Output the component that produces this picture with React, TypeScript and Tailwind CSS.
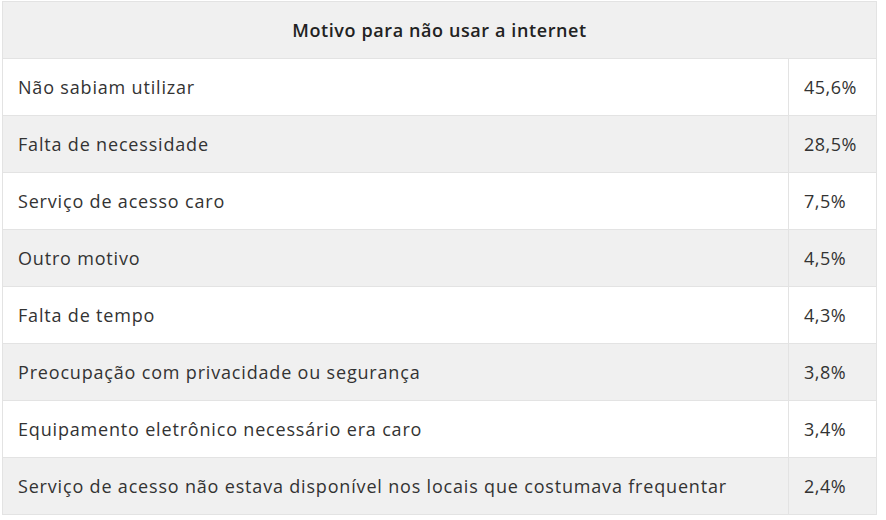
import React from "react";

const rows: [string, string][] = [
  ["Não sabiam utilizar", "45,6%"],
  ["Falta de necessidade", "28,5%"],
  ["Serviço de acesso caro", "7,5%"],
  ["Outro motivo", "4,5%"],
  ["Falta de tempo", "4,3%"],
  ["Preocupação com privacidade ou segurança", "3,8%"],
  ["Equipamento eletrônico necessário era caro", "3,4%"],
  ["Serviço de acesso não estava disponível nos locais que costumava frequentar", "2,4%"],
];

export default function App() {
  return (
    <div className="w-[886px] h-[520px] bg-white pt-px pl-[2px]" style={{ fontFamily: "'Open Sans', sans-serif" }}>
      <table className="w-[875px] border-collapse border border-[#e3e3e3] text-[#333]">
        <thead>
          <tr className="h-[57px] bg-[#f0f0f0]">
            <th colSpan={2} className="border border-[#e3e3e3] text-[18px] font-semibold tracking-[0.6px] text-[#222] text-center">
              Motivo para não usar a internet
            </th>
          </tr>
        </thead>
        <tbody>
          {rows.map(([a, b], i) => (
            <tr key={i} className={`h-[57px] ${i % 2 === 1 ? "bg-[#f0f0f0]" : "bg-white"}`}>
              <td className="border border-[#e3e3e3] pl-[15px] text-[18px] tracking-[0.82px] text-left">{a}</td>
              <td className="w-[88px] border border-[#e3e3e3] pl-[15px] text-[18px] tracking-[0.5px] text-left">{b}</td>
            </tr>
          ))}
        </tbody>
      </table>
    </div>
  );
}
